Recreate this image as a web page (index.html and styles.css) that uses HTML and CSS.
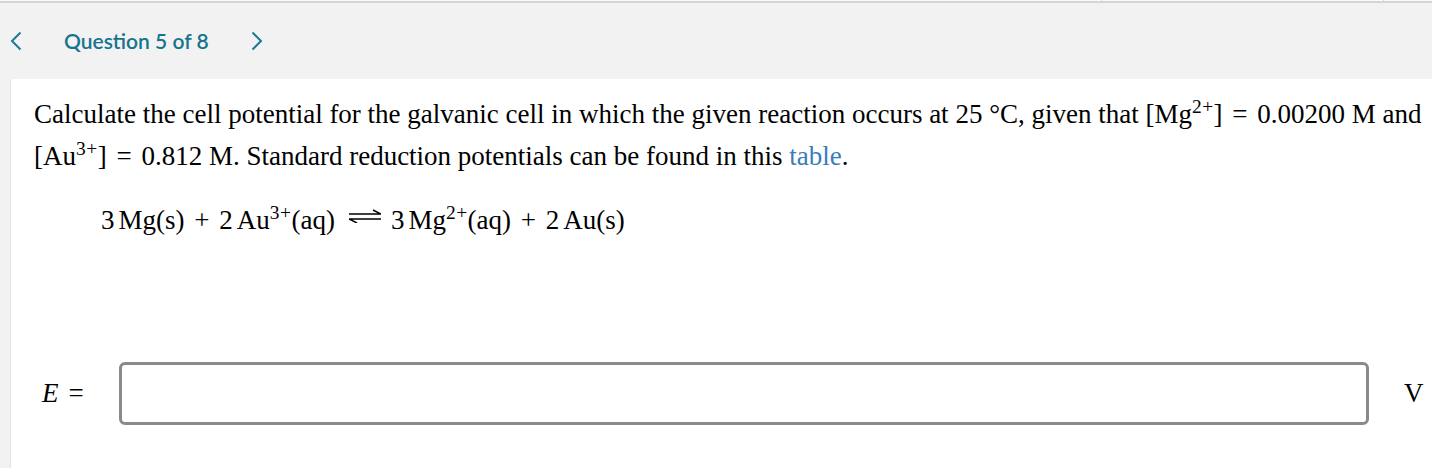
FILE: index.html
```html
<!DOCTYPE html>
<html>
<head>
<meta charset="utf-8">
<link rel="stylesheet" href="styles.css">
</head>
<body>
<div class="topline"><span class="tick t1"></span><span class="tick t2"></span></div>
<header class="nav">
  <span class="chev">
    <svg width="12" height="20" viewBox="0 0 12 20"><path d="M10.5 1.5 L2 10 L10.5 18.5" fill="none" stroke="#1b7a95" stroke-width="2"/></svg>
  </span>
  <span class="qtitle">Question 5 of 8</span>
  <span class="chev chev-r">
    <svg width="12" height="20" viewBox="0 0 12 20"><path d="M1.5 1.5 L10 10 L1.5 18.5" fill="none" stroke="#1b7a95" stroke-width="2"/></svg>
  </span>
</header>
<main class="card">
  <p class="prompt">Calculate the cell potential for the galvanic cell in which the given reaction occurs at 25&nbsp;°C, given that [Mg<sup>2+</sup>]&nbsp;<span class="op">=</span>&nbsp;0.00200&nbsp;M and<br>[Au<sup>3+</sup>]&nbsp;<span class="op">=</span>&nbsp;0.812&nbsp;M. Standard reduction potentials can be found in this <a class="link" href="#">table</a>.</p>
  <p class="eq">3<span class="thin"></span>Mg(s) <span class="op">+</span> 2<span class="thin"></span>Au<sup>3+</sup>(aq)<span class="arrow"><svg width="32" height="14" viewBox="0 0 32 14"><path d="M0 5 H32 M32 5 L24 1" fill="none" stroke="#000" stroke-width="1.4"/><path d="M0 10 H32 M0 10 L8 14" fill="none" stroke="#000" stroke-width="1.4"/></svg></span>3<span class="thin"></span>Mg<sup>2+</sup>(aq) <span class="op">+</span> 2<span class="thin"></span>Au(s)</p>
  <div class="answer">
    <span class="label"><i>E</i><span class="eqsign">=</span></span>
    <span class="field"></span>
    <span class="unit">V</span>
  </div>
</main>
</body>
</html>
```
FILE: styles.css
```css
html, body {
  margin: 0;
  padding: 0;
}
body {
  background: #f2f2f2;
  width: 1432px;
  height: 468px;
  overflow: hidden;
}
.topline {
  position: relative;
  height: 1px;
  border-bottom: 2px solid #d5d5d5;
  background: #fafafa;
}
.tick {
  position: absolute;
  top: 0;
  width: 1px;
  height: 1px;
  background: #d5d5d5;
}
.t1 { left: 1101px; }
.t2 { left: 1383px; }
.nav {
  height: 76px;
  display: flex;
  align-items: center;
  padding-left: 10px;
  font-family: Lato, "Open Sans", sans-serif;
  color: #17748f;
}
.chev {
  display: flex;
  width: 12px;
  height: 20px;
}
.chev svg { display: block; }
.qtitle {
  font-size: 21px;
  font-weight: 600;
  margin-left: 42px;
  margin-right: 42px;
  padding-bottom: 2px;
}
.card {
  margin-left: 10px;
  background: #fff;
  border-left: 1px solid #e3e3e3;
  height: 389px;
  padding: 14px 0 0 23px;
  font-family: "Liberation Serif", "Times New Roman", serif;
  font-size: 27px;
  color: #000;
}
.prompt {
  margin: 0;
  line-height: 42px;
  white-space: nowrap;
}
sup {
  font-size: 0.72em;
  line-height: 0;
  vertical-align: 0.5em;
  letter-spacing: 0.5px;
}
.op { padding: 0 3px; }
.link {
  color: #3a7dbd;
  text-decoration: none;
}
.eq {
  margin: 22px 0 0 67px;
  line-height: 42px;
}
.thin { display: inline-block; width: 4px; }
.arrow {
  display: inline-block;
  margin: 0 10px 0 14px;
  vertical-align: 6px;
}
.arrow svg { display: block; }
.answer {
  display: flex;
  align-items: center;
  margin-top: 121px;
}
.label {
  width: 77px;
  padding-left: 8px;
  white-space: nowrap;
}
.label i { font-style: italic; }
.eqsign { margin-left: 10px; }
.field {
  width: 1244px;
  height: 57px;
  border: 3px solid #8a8a8a;
  border-radius: 6px;
}
.unit {
  margin-left: 35px;
}
```
